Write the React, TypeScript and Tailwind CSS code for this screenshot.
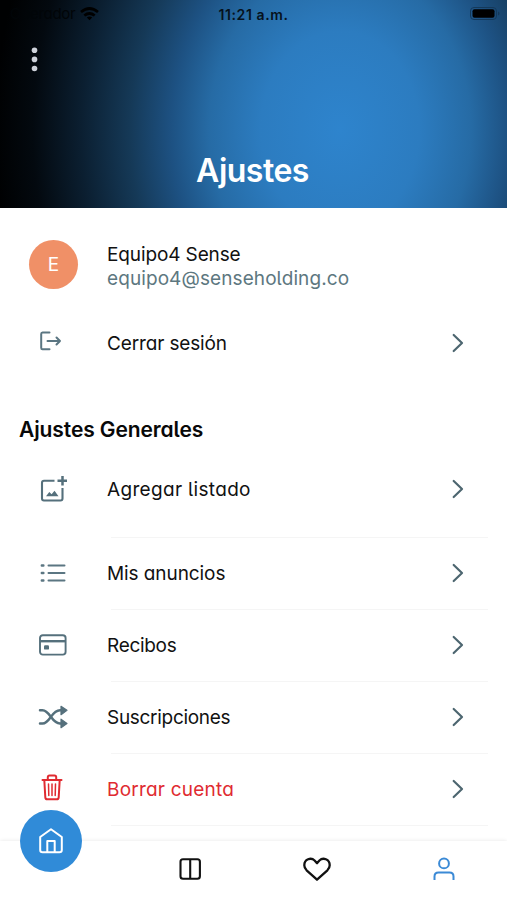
import React from 'react';

interface SettingRowProps {
  label: string;
  icon: React.ReactNode;
  className?: string;
  labelClass?: string;
}

const Chevron: React.FC = () => (
  <svg width="12" height="20" viewBox="0 0 12 20" fill="none" stroke="#4d6670" strokeWidth="2.2" strokeLinecap="round" strokeLinejoin="round">
    <path d="M1.7 2L10 10L1.7 18" />
  </svg>
);

const LogoutIcon: React.FC = () => (
  <svg width="22" height="20" viewBox="0 0 22 20" fill="none" stroke="#5b7682" strokeWidth="2" strokeLinecap="round" strokeLinejoin="round">
    <path d="M9.5 1.5H2.5Q1.2 1.5 1.2 3V16.8Q1.2 18.3 2.5 18.3H9.5M7.5 10H20M16.5 6.5L20 10L16.5 13.5" />
  </svg>
);

const AddImageIcon: React.FC = () => (
  <svg width="28" height="28" viewBox="0 0 28 28" fill="none" stroke="#55707c" strokeWidth="2.1">
    <path d="M14.5 5.8H4Q2 5.8 2 7.8V23.5Q2 25.5 4 25.5H20.5Q22.5 25.5 22.5 23.5V13" />
    <path d="M17.5 5.8H27M22.5 1V10.5" strokeWidth="2.5" />
    <path d="M6 21.3L9.3 17L11.6 19.3L14.5 15.8L18.5 21.3Z" fill="#55707c" stroke="none" />
  </svg>
);

const ListIcon: React.FC = () => (
  <svg width="26" height="20" viewBox="0 0 26 20" fill="none" stroke="#5b7682" strokeWidth="2" strokeLinecap="round">
    <path d="M8.5 2.5H24.5M8.5 10H24.5M8.5 17.5H24.5" />
    <path d="M1.8 2.5H3.4M1.8 10H3.4M1.8 17.5H3.4" strokeWidth="2.4" />
  </svg>
);

const CardIcon: React.FC = () => (
  <svg width="28" height="22" viewBox="0 0 28 22" fill="none" stroke="#55707c" strokeWidth="1.9">
    <rect x="1" y="1.2" width="25.6" height="19.4" rx="2.8" />
    <path d="M1 7.2H26.6" strokeWidth="2.4" />
    <rect x="5" y="11.2" width="5" height="4.4" rx="1.2" fill="#55707c" stroke="none" />
  </svg>
);

const ShuffleIcon: React.FC = () => (
  <svg width="30" height="24" viewBox="0 0 30 24" fill="none" stroke="#55707c" strokeWidth="2.5" strokeLinecap="round">
    <path d="M2 5.3H4.5C12 5.3 13.5 18.5 22 18.5H24M2 18.5H4.5C12 18.5 13.5 5.3 22 5.3H24" />
    <path d="M23 1.3L29 5.3L23 9.7ZM23 14.2L29 18.5L23 22.7Z" fill="#55707c" strokeWidth="1.2" strokeLinejoin="round" />
  </svg>
);

const TrashIcon: React.FC = () => (
  <svg width="22" height="27" viewBox="0 0 22 27" fill="none" stroke="#e02b31" strokeWidth="2" strokeLinecap="round" strokeLinejoin="round">
    <path d="M1.5 6H20.5M3.3 6L4.3 23.3Q4.5 25.3 6.3 25.3H15.7Q17.5 25.3 17.7 23.3L18.7 6M6.8 6V3.2Q6.8 1.4 8.5 1.4H13.5Q15.2 1.4 15.2 3.2V6" />
    <path d="M7.5 10L7.8 21.5M11 10V21.5M14.5 10L14.2 21.5" strokeWidth="1.5" />
  </svg>
);

const SettingRow: React.FC<SettingRowProps> = ({ label, icon, className = '', labelClass = 'text-[#111]' }) => (
  <div className={`flex items-center pl-[37px] pr-[43px] ${className}`}>
    <div className="w-[70px] flex items-center">{icon}</div>
    <span className={`flex-1 pt-[2px] text-[19px] leading-6 whitespace-nowrap ${labelClass}`}>{label}</span>
    <Chevron />
  </div>
);

const Divider: React.FC = () => <div className="h-px ml-[111px] mr-[19px] bg-[#f5f5f5]"></div>;

const App: React.FC = () => {
  return (
    <div className="w-[507px] h-[900px] flex flex-col overflow-hidden bg-white font-['Inter','Noto_Sans',sans-serif] [font-feature-settings:'cv11','cv05']">
      <header className="h-[208px] shrink-0 flex flex-col bg-[radial-gradient(ellipse_345px_430px_at_340px_130px,#2e84cd_0%,#2c7cc0_23%,#266ba5_38%,#1d5182_49%,#153957_61%,#0b1f31_75%,#03090f_89%,#000102_100%)]">
        <div className="h-7 flex items-center text-[14px] text-black">
          <div className="w-[206px] flex items-center pl-[10px] gap-[6px]">
            <span className="w-[64px] text-[15px] tracking-[-0.3px] text-[#010508]">Operador</span>
            <svg width="19" height="14" viewBox="0 0 19 14" fill="none" stroke="#000" strokeWidth="2.7">
              <path d="M1 5Q9.5 -2 18 5M4.3 8.5Q9.5 4.5 14.7 8.5" />
              <path d="M6.8 10.5Q9.5 8.7 12.2 10.5L9.5 13.3Z" fill="#000" stroke="none" />
            </svg>
          </div>
          <span className="w-[95px] text-center font-semibold text-[#06121d] tracking-[0.6px] [font-feature-settings:normal]">11:21 a.m.</span>
          <svg className="ml-auto mr-[6px]" width="31" height="14" viewBox="0 0 31 14">
            <rect x="0.5" y="0.5" width="26" height="12" rx="3.5" fill="none" stroke="#14395a" />
            <rect x="2.5" y="2.3" width="22" height="8.5" rx="2" fill="#000" />
            <path d="M28 4.5V8.5Q29.5 8 29.5 6.5T28 4.5Z" fill="#14395a" />
          </svg>
        </div>
        <div className="pl-[31px] pt-[19px]">
          <svg width="7" height="26" viewBox="0 0 7 26" fill="#ced2da">
            <circle cx="3.5" cy="3.3" r="2.8" />
            <circle cx="3.5" cy="12.4" r="2.8" />
            <circle cx="3.5" cy="21.5" r="2.8" />
          </svg>
        </div>
        <h1 className="mt-auto pb-[17px] pr-[2px] text-center text-[32px] leading-10 font-semibold tracking-[-0.5px] text-white">Ajustes</h1>
      </header>

      <main className="flex-1 overflow-hidden">
        <div className="h-[113px] flex items-center pl-[29px] gap-[29px]">
          <div className="size-[49px] rounded-full bg-[#f09067] flex items-center justify-center pt-[2px] text-[19px] text-white">E</div>
          <div className="pt-[5px] text-[19px] leading-6 whitespace-nowrap">
            <p className="text-[#111] tracking-[-0.12px]">Equipo4 Sense</p>
            <p className="text-[#5d7780] tracking-[0.09px]">equipo4@senseholding.co</p>
          </div>
        </div>
        <SettingRow
          label="Cerrar sesión"
          icon={<div className="pl-[3px] pb-[4px]"><LogoutIcon /></div>}
          className="h-[44px]"
          labelClass="text-[#111] tracking-[-0.14px]"
        />
        <h2 className="h-[87px] pt-[53px] pl-[19px] text-[21px] leading-6 font-semibold tracking-[-0.1px] text-[#080808]">Ajustes Generales</h2>
        <SettingRow
          label="Agregar listado"
          icon={<div className="pl-[3px]"><AddImageIcon /></div>}
          className="h-[85px] pb-[12px]"
          labelClass="text-[#111] tracking-[0.32px]"
        />
        <Divider />
        <SettingRow
          label="Mis anuncios"
          icon={<div className="pl-[3px]"><ListIcon /></div>}
          className="h-[71px] pb-[2px]"
          labelClass="text-[#111] tracking-[-0.08px]"
        />
        <Divider />
        <SettingRow
          label="Recibos"
          icon={<div className="pl-[2px]"><CardIcon /></div>}
          className="h-[71px] pb-[2px]"
          labelClass="text-[#111] tracking-[-0.3px]"
        />
        <Divider />
        <SettingRow
          label="Suscripciones"
          icon={<div className="pl-[1px]"><ShuffleIcon /></div>}
          className="h-[71px] pb-[2px]"
          labelClass="text-[#111] tracking-[-0.3px]"
        />
        <Divider />
        <SettingRow
          label="Borrar cuenta"
          icon={<div className="pl-[4px] pb-[3px]"><TrashIcon /></div>}
          className="h-[71px] pb-[2px]"
          labelClass="text-[#e02b31] tracking-[0.22px]"
        />
        <Divider />
      </main>

      <nav className="relative h-[59px] shrink-0 grid grid-cols-4 pb-[3px] bg-white shadow-[0_0_4px_rgba(0,0,0,0.10)]">
        <div></div>
        <div className="flex items-center justify-center">
          <svg width="22" height="22" viewBox="0 0 22 22" fill="none" stroke="#111" strokeWidth="2.1">
            <rect x="1.5" y="1.3" width="19.4" height="19.4" rx="2.5" />
            <path d="M11.2 1.3V20.7" />
          </svg>
        </div>
        <div className="flex items-center justify-center">
          <svg width="28" height="24" viewBox="0 0 28 24" fill="none" stroke="#111" strokeWidth="2.3" strokeLinejoin="round">
            <path d="M14 6.2L11.6 3.5C8 0 1.3 2.2 1.3 8.2C1.3 10.5 2.3 12 3.6 13.3L14 22.7L24.4 13.3C25.7 12 26.7 10.5 26.7 8.2C26.7 2.2 20 0 16.4 3.5Z" />
          </svg>
        </div>
        <div className="flex items-center justify-center">
          <svg width="22" height="24" viewBox="0 0 22 24" fill="none" stroke="#3b8ad6" strokeWidth="2">
            <circle cx="11" cy="6.4" r="4.9" />
            <path d="M1.5 23V19.5Q1.5 15.5 5.5 15.5H16.5Q20.5 15.5 20.5 19.5V23" />
          </svg>
        </div>
        <button className="absolute left-[20px] -top-[31px] size-[62px] rounded-full bg-[#308bd8] flex items-center justify-center">
          <svg width="24" height="26" viewBox="0 0 24 26" fill="none" stroke="#fff" strokeWidth="2" strokeLinejoin="round">
            <path d="M1.2 9L12 1.3L22.8 9V22Q22.8 24.3 20.5 24.3H3.5Q1.2 24.3 1.2 22Z" />
            <path d="M8.3 24V13H15.7V24" />
          </svg>
        </button>
      </nav>
    </div>
  );
};

export default App;
